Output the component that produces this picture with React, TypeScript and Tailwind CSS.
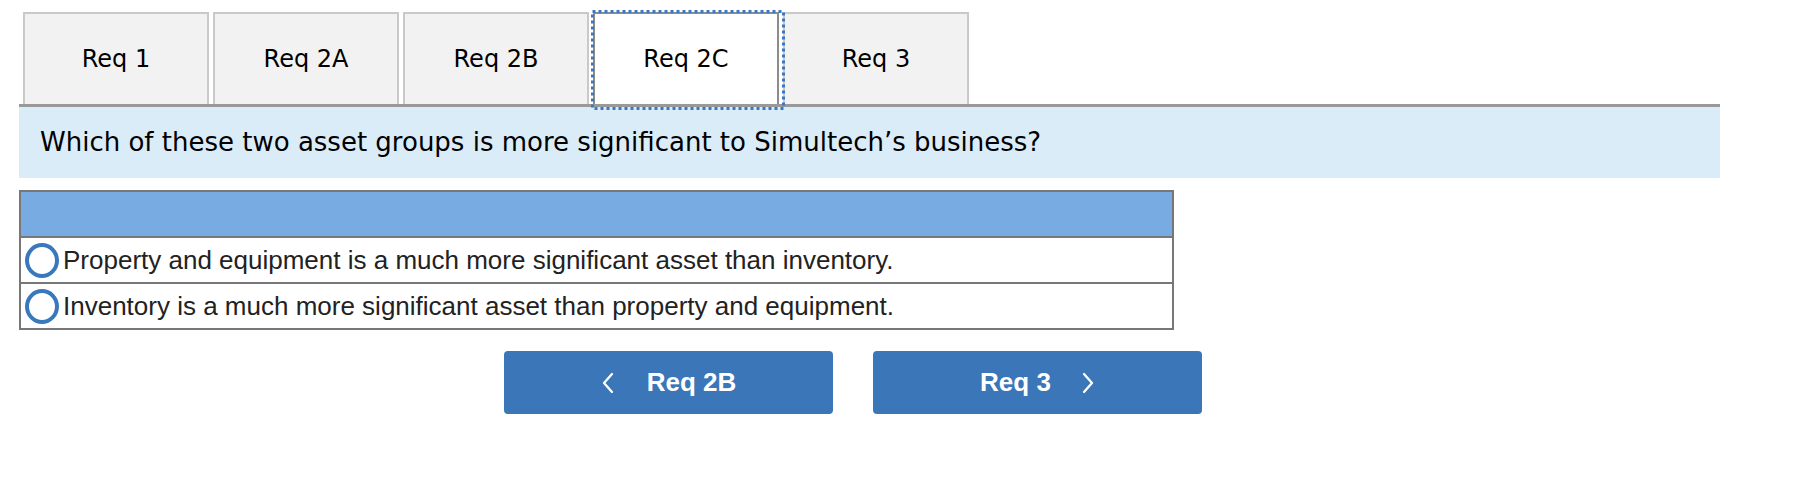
const tabs = ["Req 1", "Req 2A", "Req 2B", "Req 2C", "Req 3"];
const active = "Req 2C";

const options = [
  "Property and equipment is a much more significant asset than inventory.",
  "Inventory is a much more significant asset than property and equipment.",
];

function Radio() {
  return (
    <span className="ml-[4px] mr-[4px] h-[35px] w-[34px] shrink-0 rounded-[50%] border-[4px] border-[#3a78bc] bg-white" />
  );
}

function Chevron({ dir }: { dir: "left" | "right" }) {
  return (
    <svg width="14" height="22" viewBox="0 0 14 22" fill="none">
      <path
        d={dir === "left" ? "M11 2 L3 11 L11 20" : "M3 2 L11 11 L3 20"}
        stroke="white"
        strokeWidth="2.3"
        strokeLinecap="round"
        strokeLinejoin="round"
      />
    </svg>
  );
}

export default function App() {
  return (
    <div className="h-[480px] w-[1796px] bg-white pl-[19px] pt-[12px]">
      <div className="flex gap-[4px] pl-[4px]">
        {tabs.map((t) => {
          const isActive = t === active;
          return (
            <div
              key={t}
              className={
                "relative flex h-[92px] w-[186px] items-center justify-center border-2 border-b-0 text-[24px] text-black " +
                (isActive
                  ? "border-[#8c8c8c] bg-white"
                  : "border-[#c9c9c9] bg-[#f2f2f2]")
              }
              style={{ fontFamily: "'DejaVu Sans', Verdana, sans-serif" }}
            >
              {t}
              {isActive && (
                <svg
                  className="pointer-events-none absolute -left-[4px] -top-[4px] z-10"
                  width="194"
                  height="100"
                >
                  <rect
                    x="1.5"
                    y="1.5"
                    width="191"
                    height="97"
                    fill="none"
                    stroke="#3a78c2"
                    strokeWidth="3"
                    strokeDasharray="3 3"
                  />
                </svg>
              )}
            </div>
          );
        })}
      </div>

      <div
        className="flex h-[74px] w-[1701px] items-center border-t-[3px] border-[#999] bg-[#dbecf9] pl-[21px] text-[26px] text-black"
        style={{ fontFamily: "'DejaVu Sans', Verdana, sans-serif" }}
      >
        Which of these two asset groups is more significant to Simultech’s business?
      </div>

      <div
        className="mt-[12px] w-[1155px] border-2 border-[#777]"
        style={{ fontFamily: "'Liberation Sans', Arial, sans-serif" }}
      >
        <div className="h-[44px] bg-[#78abe1]" />
        {options.map((o) => (
          <div
            key={o}
            className="flex h-[46px] items-center border-t-2 border-[#777] text-[26px] leading-none text-[#222]"
          >
            <Radio />
            <span>{o}</span>
          </div>
        ))}
      </div>

      <div
        className="mt-[21px] flex gap-[40px] pl-[485px]"
        style={{ fontFamily: "'Liberation Sans', Arial, sans-serif" }}
      >
        <button className="flex h-[63px] w-[329px] items-center justify-center gap-[32px] rounded-[4px] bg-[#3a76b8] text-[26px] font-bold text-white">
          <Chevron dir="left" />
          <span>Req 2B</span>
        </button>
        <button className="flex h-[63px] w-[329px] items-center justify-center gap-[30px] rounded-[4px] bg-[#3a76b8] text-[26px] font-bold text-white">
          <span>Req 3</span>
          <Chevron dir="right" />
        </button>
      </div>
    </div>
  );
}
